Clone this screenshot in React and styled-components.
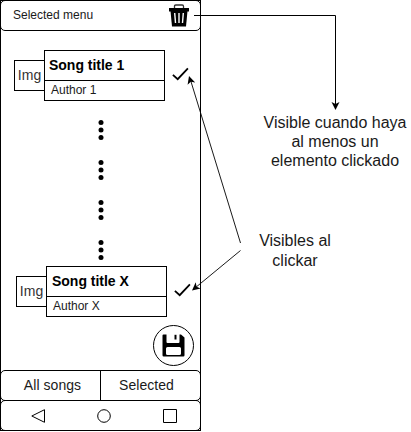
import React from 'react';
import styled, { createGlobalStyle } from 'styled-components';

const GlobalStyle = createGlobalStyle`
  * { box-sizing: border-box; }
  body {
    margin: 0;
    background: #fff;
    color: #1a1a1a;
    font-family: "Liberation Sans", Arial, sans-serif;
    overflow: hidden;
  }
  svg { display: block; flex: none; }
`;

const Board = styled.main`
  position: relative;
  display: flex;
  width: 411px;
  height: 432px;
`;

const Phone = styled.section`
  display: flex;
  flex: none;
  flex-direction: column;
  width: 201px;
  height: 431px;
  border: 1px solid #000;
`;

const Bar = styled.div`
  display: flex;
  flex: none;
  align-items: center;
  height: 31px;
  margin: ${(p) => p.$margin || '-1px -1px 0'};
  border: 1px solid #000;
  border-radius: 5px;
`;

const MenuTitle = styled.h1`
  flex: 1;
  margin: 0;
  padding: 0 0 1px 12px;
  font-size: 12px;
  font-weight: 400;
  line-height: 14px;
`;

const TrashButton = styled.span`
  padding-right: 10px;
`;

const Content = styled.div`
  display: flex;
  flex: 1;
  flex-direction: column;
  min-height: 0;
  padding-top: 19px;
`;

const Song = styled.article`
  display: flex;
  flex: none;
  align-items: center;
  margin-left: ${(p) => p.$indent}px;
`;

const Cover = styled.div`
  width: 31px;
  height: 31px;
  border: 1px solid #000;
  color: #333;
  font-size: 14px;
  line-height: 29px;
  text-align: center;
`;

const Card = styled.div`
  width: 121px;
  height: 51px;
  margin-left: -1px;
  border: 1px solid #000;
`;

const SongTitle = styled.h2`
  height: 30px;
  margin: 0;
  padding-left: ${(p) => p.$pad}px;
  border-bottom: 1px solid #000;
  color: #000;
  font-size: 14px;
  letter-spacing: -0.02px;
  line-height: 29px;
  white-space: nowrap;
`;

const Author = styled.p`
  margin: 0;
  padding-left: 6px;
  font-size: 12px;
  line-height: 18px;
`;

const CheckMark = styled.span`
  margin-left: 7px;
  padding-bottom: 3px;
`;

const Ellipses = styled.div`
  display: flex;
  flex: none;
  flex-direction: column;
  gap: 20px;
  height: 165px;
  padding: 19px 0 0 97px;
`;

const SaveButton = styled.div`
  display: grid;
  flex: none;
  place-items: center;
  width: 41px;
  height: 41px;
  margin: 8px 0 0 152px;
  padding-bottom: 1px;
  border: 1px solid #000;
  border-radius: 50%;
`;

const Tab = styled.div`
  width: ${(p) => p.$width}px;
  height: 29px;
  padding: ${(p) => p.$padding};
  font-size: 14px;
  letter-spacing: 0.05px;
  line-height: 29px;
  text-align: center;

  & + & {
    border-left: 1px solid #000;
  }
`;

const NavIcons = styled.div`
  display: flex;
  align-items: center;
  padding: 1px 0 0 30px;
  gap: 52px;
`;

const Notes = styled.aside`
  flex: none;
  width: 210px;
`;

const Note = styled.p`
  width: ${(p) => p.$width}px;
  margin: ${(p) => p.$margin};
  font-size: 16px;
  line-height: ${(p) => p.$leading}px;
  text-align: center;
  white-space: nowrap;
`;

const Arrows = styled.svg`
  position: absolute;
  inset: 0;
`;

const TrashIcon = () => (
  <svg width="22" height="23" viewBox="0 0 22 23">
    <path d="M6.5 4V2.3Q6.5 1 7.8 1h6.4q1.3 0 1.3 1.3V4" fill="none" stroke="#333" strokeWidth="1.3" />
    <path d="M1 4h20v3.5H1z" />
    <path d="M2.5 7h17L18 22.5H4z" />
    <path d="m6.7 9 .8 10M11 9v10m4.3-10-.8 10" fill="none" stroke="#fff" strokeWidth="1.4" />
  </svg>
);

const CheckIcon = () => (
  <svg width="18" height="14" viewBox="0 0 18 14">
    <path d="m.9 7.8 4.8 4.4L15.9 1.3" fill="none" stroke="#000" strokeWidth="1.8" />
  </svg>
);

const Dots = () => (
  <svg width="6" height="20" viewBox="0 0 6 20">
    <circle cx="3" cy="2.5" r="2.5" />
    <circle cx="3" cy="10" r="2.5" />
    <circle cx="3" cy="17.5" r="2.5" />
  </svg>
);

const SaveIcon = () => (
  <svg width="23" height="23" viewBox="0 0 23 23">
    <path fillRule="evenodd" d="M1.5.5H4.5V8q0 1 1 1h11q1 0 1-1V.5H19l3.5 3v17.8q0 1.2-1.2 1.2H1.7Q.5 22.5.5 21.3V1.5q0-1 1-1ZM5.5 13Q4 13 4 14.5v5Q4 21 5.5 21h12q1.5 0 1.5-1.5v-5q0-1.5-1.5-1.5Z" />
    <path d="M13.5.8v4.7" stroke="#000" strokeWidth="2" />
  </svg>
);

const NavGlyphs = () => (
  <NavIcons>
    <svg width="14" height="14" viewBox="0 0 14 14" fill="none" stroke="#000">
      <path d="M.8 7 13.5.7v12.6Z" />
    </svg>
    <svg width="14" height="14" viewBox="0 0 14 14" fill="none" stroke="#000">
      <circle cx="7" cy="7" r="6.3" />
    </svg>
    <svg width="14" height="14" viewBox="0 0 14 14" fill="none" stroke="#000">
      <path d="M.5.5h13v13H.5z" />
    </svg>
  </NavIcons>
);

const SongRow = ({ indent, title, author, pad }) => (
  <Song $indent={indent}>
    <Cover>Img</Cover>
    <Card>
      <SongTitle $pad={pad}>{title}</SongTitle>
      <Author>{author}</Author>
    </Card>
    <CheckMark><CheckIcon /></CheckMark>
  </Song>
);

export default function App() {
  return (
    <Board>
      <GlobalStyle />
      <Phone>
        <Bar>
          <MenuTitle>Selected menu</MenuTitle>
          <TrashButton><TrashIcon /></TrashButton>
        </Bar>
        <Content>
          <SongRow indent={13} title="Song title 1" author="Author 1" pad={4} />
          <Ellipses>
            <Dots />
            <Dots />
            <Dots />
            <Dots />
          </Ellipses>
          <SongRow indent={15} title="Song title X" author="Author X" pad={5} />
          <SaveButton><SaveIcon /></SaveButton>
        </Content>
        <Bar $margin="0 -1px">
          <Tab $width={99} $padding="0 0 0 4px">All songs</Tab>
          <Tab $width={100} $padding="0 8px 0 0">Selected</Tab>
        </Bar>
        <Bar $margin="-1px">
          <NavGlyphs />
        </Bar>
      </Phone>
      <Notes>
        <Note $width={144} $leading={19} $margin="113px 0 0 62px">
          Visible cuando haya<br />al menos un<br />elemento clickado
        </Note>
        <Note $width={74} $leading={20} $margin="61px 0 0 57px">
          Visibles al<br />clickar
        </Note>
      </Notes>
      <Arrows width="411" height="432" viewBox="0 0 411 432">
        <g fill="none" stroke="#000">
          <path d="M194 15.5h141.5V104" />
          <path d="M240.5 243 190.5 80" strokeWidth=".9" />
          <path d="M240.5 250.5 195 288" strokeWidth=".9" />
        </g>
        <path d="m335.5 110-4-8 4 2 4-2Z" />
        <path d="m189 76 6.2 6.4-4.4-.7-3.2 3.1Z" />
        <path d="m192 290.5 3.7-8.2.9 4.4 4.1 1.8Z" />
      </Arrows>
    </Board>
  );
}
